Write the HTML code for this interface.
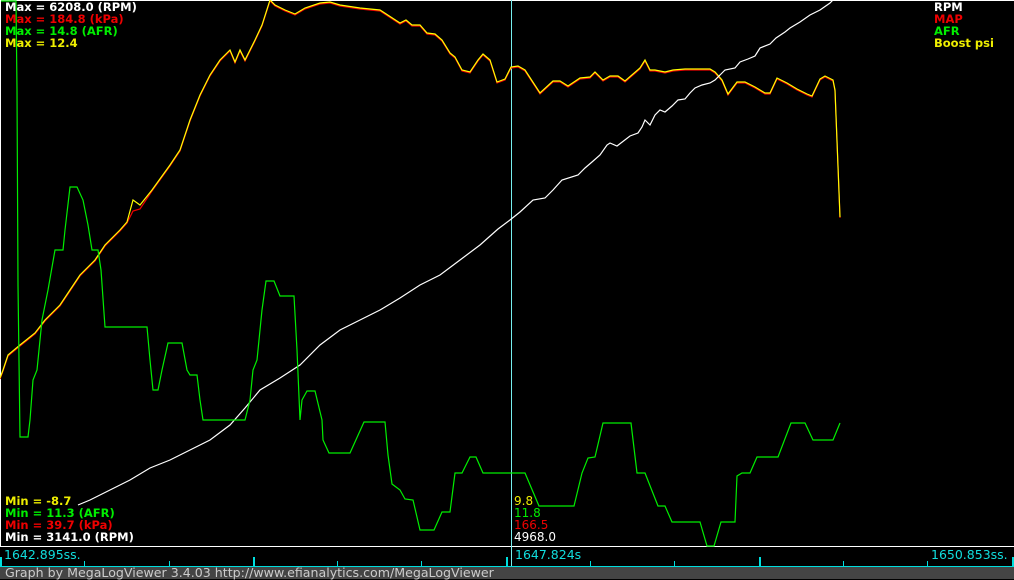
<!DOCTYPE html>
<html><head><meta charset="utf-8"><style>
html,body{margin:0;padding:0;background:#000;width:1014px;height:579px;overflow:hidden}
.t{position:absolute;font-family:"DejaVu Sans","Liberation Sans",sans-serif;font-size:12px;line-height:12px;white-space:pre}
.b{font-weight:bold;font-size:11.5px}
</style></head><body>
<svg width="1014" height="579" style="position:absolute;left:0;top:0" shape-rendering="crispEdges">
<rect x="0" y="0" width="1014" height="579" fill="#000"/>
<line x1="0.5" y1="0" x2="0.5" y2="546" stroke="#fff"/>
<line x1="0" y1="0.5" x2="1014" y2="0.5" stroke="#fff"/>
<line x1="0" y1="546.5" x2="1014" y2="546.5" stroke="#fff"/>
<line x1="511.5" y1="0" x2="511.5" y2="566" stroke="#7ee" />
<line x1="0" y1="566.5" x2="1014" y2="566.5" stroke="#0dd" stroke-width="1.5"/>
<g stroke="#0dd" stroke-width="1">
<line x1="84.5" y1="561" x2="84.5" y2="566"/><line x1="169.5" y1="561" x2="169.5" y2="566"/>
<line x1="337.5" y1="561" x2="337.5" y2="566"/><line x1="421.5" y1="561" x2="421.5" y2="566"/>
<line x1="590.5" y1="561" x2="590.5" y2="566"/><line x1="674.5" y1="561" x2="674.5" y2="566"/>
<line x1="843.5" y1="561" x2="843.5" y2="566"/><line x1="927.5" y1="561" x2="927.5" y2="566"/>
</g>
<g stroke="#0dd" stroke-width="2">
<line x1="1" y1="557" x2="1" y2="566"/><line x1="254" y1="557" x2="254" y2="566"/>
<line x1="507" y1="557" x2="507" y2="566"/><line x1="760" y1="557" x2="760" y2="566"/><line x1="1013" y1="557" x2="1013" y2="566"/>
</g>
<rect x="0" y="567" width="1014" height="12" fill="#444"/>
<g fill="none" stroke-width="1.2" shape-rendering="auto">
<polyline stroke="#e00" transform="translate(0,1)" points="0,378 3,370 8,355 20,345 30,337 35,333 45,320 60,305 70,290 80,275 95,260 105,245 120,230 127,222 133,210 140,208 152,190 170,165 180,150 190,120 200,95 210,75 220,60 230,50 235,62 240,50 245,60 255,40 262,25 270,0 275,5 285,10 295,14 305,8 320,3 330,2 340,5 360,8 380,10 400,23 406,20 412,25 420,25 427,33 435,34 442,40 450,53 455,57 462,70 470,72 478,60 483,54 490,60 497,82 505,79 511,67 518,66 525,70 540,93 553,81 560,81 568,86 580,78 590,77 595,72 603,80 610,76 618,76 625,81 640,68 645,60 650,70 655,70 665,72 673,70 685,69 710,69 715,72 722,80 728,94 737,82 745,82 755,87 765,93 770,93 777,78 787,83 797,89 807,94 812,96 820,79 825,76 833,80 835,90 840,217"/>
<polyline stroke="#ff0" points="0,378 3,370 8,355 20,345 30,337 35,333 45,320 60,305 70,290 80,275 95,260 105,245 120,230 127,222 133,200 140,205 152,190 170,165 180,150 190,120 200,95 210,75 220,60 230,50 235,62 240,50 245,60 255,40 262,25 270,0 275,5 285,10 295,14 305,8 320,3 330,2 340,5 360,8 380,10 400,23 406,20 412,25 420,25 427,33 435,34 442,40 450,53 455,57 462,70 470,72 478,60 483,54 490,60 497,82 505,79 511,67 518,66 525,70 540,93 553,81 560,81 568,86 580,78 590,77 595,72 603,80 610,76 618,76 625,81 640,68 645,60 650,70 655,70 665,72 673,70 685,69 710,69 715,72 722,80 728,94 737,82 745,82 755,87 765,93 770,93 777,78 787,83 797,89 807,94 812,96 820,79 825,76 833,80 835,90 840,217"/>
<polyline stroke="#fff" points="78,505 90,500 110,490 130,480 150,468 170,460 190,450 210,440 230,425 245,408 260,390 280,378 300,365 320,345 340,330 360,320 380,310 400,298 420,285 440,275 460,260 480,245 498,229 510,220 520,212 533,200 545,198 553,190 562,180 578,175 585,168 592,162 600,155 607,145 610,143 617,146 630,136 638,133 642,127 645,120 650,125 655,115 660,110 665,112 672,106 678,100 685,99 690,93 695,88 702,85 710,83 715,80 720,75 725,70 735,68 740,62 748,59 755,56 760,48 770,44 776,38 785,32 790,28 800,22 810,15 820,10 830,3 833,0"/>
<polyline stroke="#0e0" points="1,1 16,1 17,90 18,285 20,437 28,437 30,420 33,380 37,370 42,320 48,290 55,250 63,250 65,230 70,187 77,187 83,200 88,225 92,250 98,250 101,270 105,327 147,327 150,360 153,390 158,390 162,370 168,343 182,343 187,370 190,375 197,375 200,400 203,420 245,420 250,400 253,370 257,360 262,310 266,281 274,281 280,296 294,296 297,350 300,420 302,400 307,391 315,391 322,420 323,440 329,453 350,453 364,422 385,422 388,455 392,484 400,490 405,499 413,500 420,530 434,530 442,512 450,512 455,473 462,473 470,457 476,457 483,473 525,473 539,506 574,506 582,473 588,458 595,457 603,423 631,423 637,473 645,473 658,506 665,506 672,522 700,522 707,546 714,546 721,522 735,522 737,476 742,473 750,473 757,457 778,457 791,423 805,423 813,440 833,440 840,423"/>
</g>
</svg>
<div class="t b" style="left:5px;top:1px;color:#fff">Max = 6208.0 (RPM)</div>
<div class="t b" style="left:5px;top:13px;color:#e00">Max = 184.8 (kPa)</div>
<div class="t b" style="left:5px;top:25px;color:#0e0">Max = 14.8 (AFR)</div>
<div class="t b" style="left:5px;top:37px;color:#ee0">Max = 12.4</div>
<div class="t b" style="left:934px;top:1px;color:#fff">RPM</div>
<div class="t b" style="left:934px;top:13px;color:#e00">MAP</div>
<div class="t b" style="left:934px;top:25px;color:#0e0">AFR</div>
<div class="t b" style="left:934px;top:37px;color:#ee0">Boost psi</div>
<div class="t b" style="left:5px;top:495px;color:#ee0">Min = -8.7</div>
<div class="t b" style="left:5px;top:507px;color:#0e0">Min = 11.3 (AFR)</div>
<div class="t b" style="left:5px;top:519px;color:#e00">Min = 39.7 (kPa)</div>
<div class="t b" style="left:5px;top:531px;color:#fff">Min = 3141.0 (RPM)</div>
<div class="t" style="left:514px;top:495px;color:#ee0">9.8</div>
<div class="t" style="left:514px;top:507px;color:#0e0">11.8</div>
<div class="t" style="left:514px;top:519px;color:#e00">166.5</div>
<div class="t" style="left:514px;top:531px;color:#fff">4968.0</div>
<div class="t" style="left:4px;top:549px;color:#1dd;font-size:12.5px">1642.895ss.</div>
<div class="t" style="left:515px;top:549px;color:#1dd;font-size:12.5px">1647.824s</div>
<div class="t" style="left:931px;top:549px;color:#1dd;font-size:12.5px">1650.853ss.</div>
<div class="t" style="left:5px;top:567px;color:#ccc;font-size:12.6px">Graph by MegaLogViewer 3.4.03 http://www.efianalytics.com/MegaLogViewer</div>
</body></html>
